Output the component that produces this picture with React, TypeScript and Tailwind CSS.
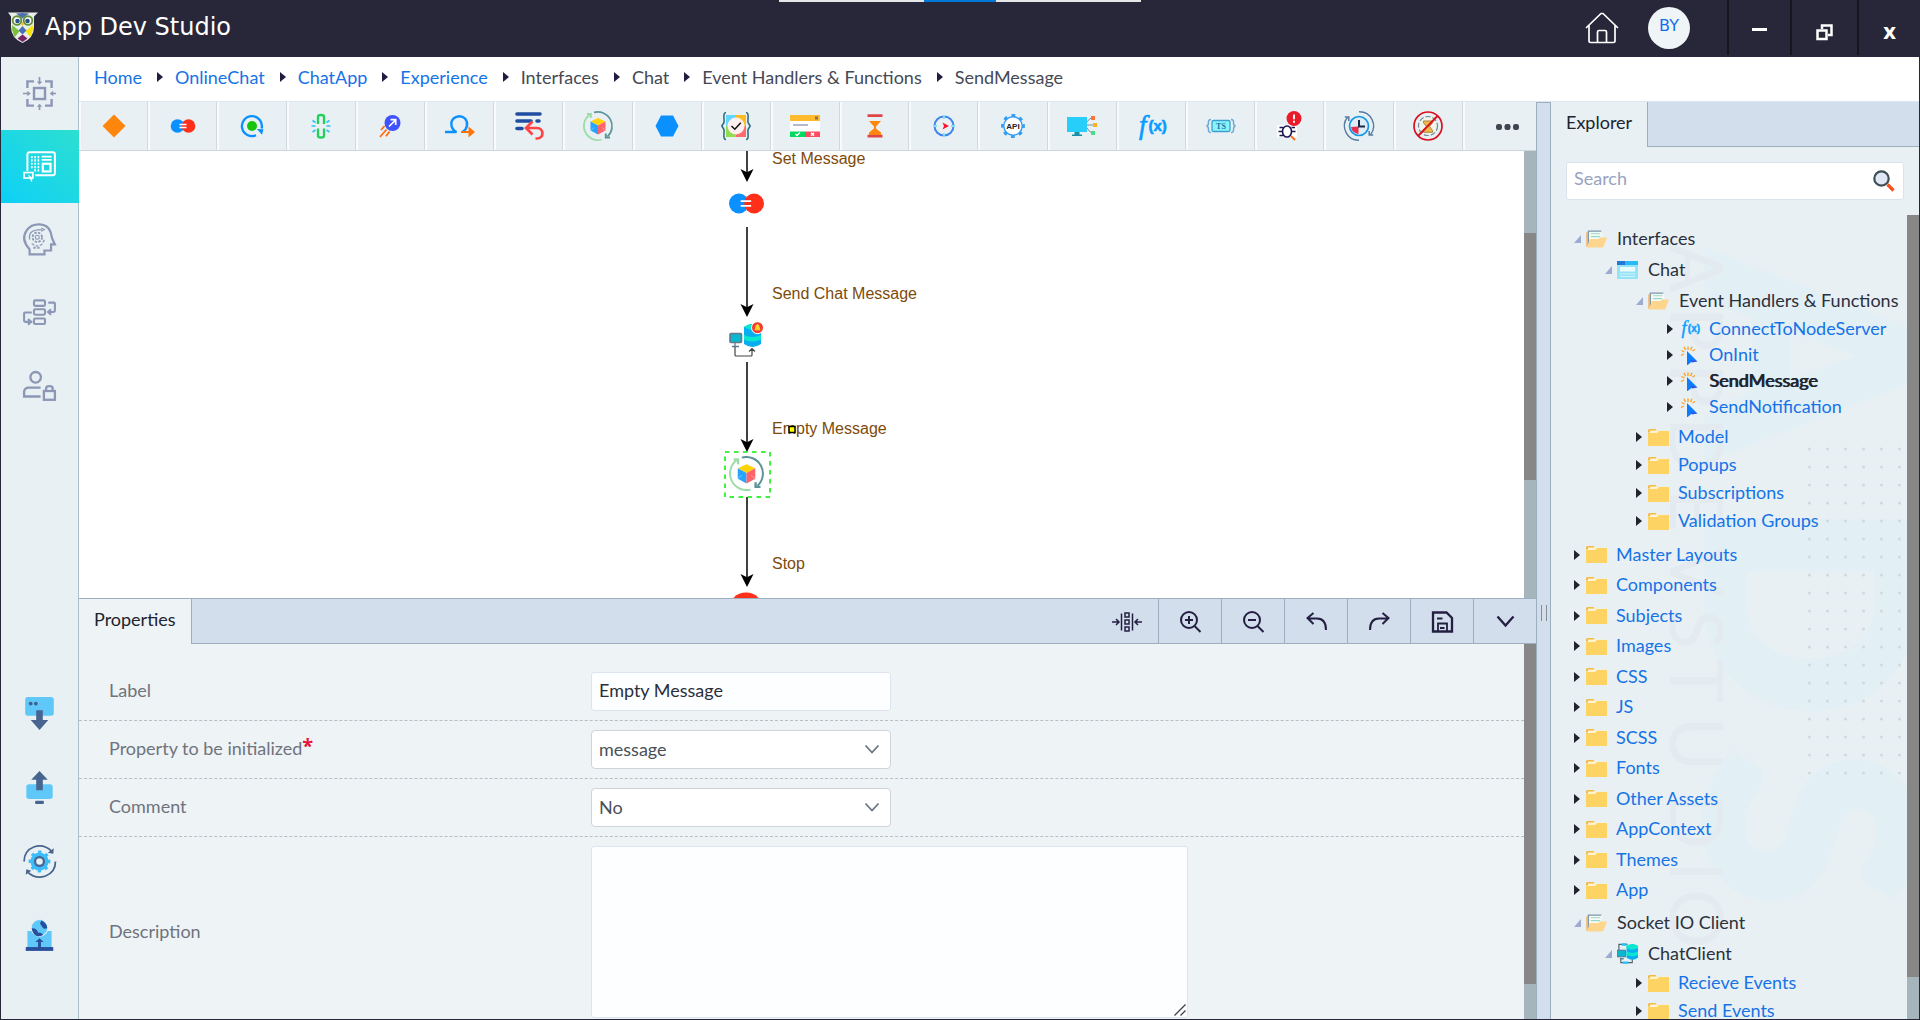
import { useState } from "react";
import type { ReactNode } from "react";

/* ---------- shared drawings ---------- */

const Svg = ({ size = 30, children, className = "" }: { size?: number; children: ReactNode; className?: string }) => (
    <svg width={size} height={size} viewBox="0 0 30 30" fill="none" className={`shrink-0 overflow-visible ${className}`} aria-hidden="true">
        {children}
    </svg>
);

const EqualShape = () => (
    <>
        <circle cx="8.5" cy="15" r="8.5" fill="#0b90ff" />
        <circle cx="21.5" cy="15" r="8.5" fill="#ff3019" />
        <path d="M10 13h9M10 17h9" stroke="#fff" strokeWidth="1.6" />
    </>
);

const CubeShape = () => (
    <>
        <path d="M6.500 3.700A14.200 14.200 0 0 0 18.500 28.800" stroke="#9ddba8" strokeWidth="1.700" />
        <path d="M4 3h3.800v4" stroke="#9ddba8" strokeWidth="2" />
        <path d="M11 1.400A14.200 14.200 0 0 1 24.500 25.500" stroke="#5c9499" strokeWidth="1.700" />
        <path d="M22.800 22.500v4h4.200" stroke="#5c9499" strokeWidth="2" />
        <path d="M15 7 22.500 10.500 15 14.500 7.500 10.500Z" fill="#ffd20a" />
        <path d="M7.500 10.500 15 14.500V23.500L7.500 19.500Z" fill="#27a4ff" />
        <path d="M22.500 10.500 15 14.500V23.500l7.500-4Z" fill="#ff646c" />
        <path d="m7.500 19.500 3.500-3M19 16.500l3.500 3" stroke="#fff" strokeOpacity=".4" strokeWidth=".8" />
    </>
);

const FxShape = () => (
    <g fill="#079cff" stroke="#079cff" strokeWidth=".6">
        <text x="3" y="23" fontSize="27" fontStyle="italic" fontFamily="'Liberation Serif', serif">f</text>
        <text x="12.5" y="20" fontSize="15" fontWeight="bold" fontFamily="'Liberation Sans', sans-serif">(x)</text>
    </g>
);

const GearPath = ({ r, color, width }: { r: number; color: string; width: number }) => (
    <>
        <circle cx="15" cy="15" r={r} stroke={color} strokeWidth={width} />
        <circle cx="15" cy="15" r={r + 1.6} stroke={color} strokeWidth="2.6" strokeDasharray={`${(r + 1.6) * 0.35} ${(r + 1.6) * 0.4354}`} transform="rotate(-10 15 15)" />
    </>
);

/* ---------- toolbar ---------- */

const tools: { name: string; icon: ReactNode }[] = [
    { name: "Decision", icon: <path d="M15 3.500 26.500 15 15 26.500 3.500 15Z" fill="#ff860d" /> },
    {
        name: "Assign",
        icon: (
            <>
                <circle cx="9.500" cy="15" r="6.800" fill="#0b90ff" />
                <circle cx="20.500" cy="15" r="6.800" fill="#ff3019" />
                <path d="M11.500 13.500h7M11.500 16.500h7" stroke="#fff" strokeWidth="1.300" />
            </>
        ),
    },
    {
        name: "Loop",
        icon: (
            <>
                <path d="M19 24.200 a10 10 0 1 1 5.600-6.700" stroke="#0b90ff" strokeWidth="2.300" />
                <path d="m19.800 18 6.700.3-1.500 5.500Z" fill="#0b90ff" />
                <circle cx="15" cy="15" r="5" fill="#17c60c" />
            </>
        ),
    },
    {
        name: "Break",
        icon: (
            <>
                <path d="M12 13V5.500q0-1.500 3-1.500t3 1.500V13M12 17.500v7.500q0 1.500 3 1.500t3-1.500v-7.500" stroke="#1fd15a" strokeWidth="2.300" />
                <path d="M5.500 15h4M20.500 15h4M6.500 9.500l3 2M23.500 9.500l-3 2M6.500 21l3-2M23.500 21l-3-2" stroke="#31c1ef" strokeWidth="1.600" />
            </>
        ),
    },
    {
        name: "Launch",
        icon: (
            <>
                <circle cx="17.500" cy="12" r="8" fill="#4052ff" />
                <path d="m14 15.500 6.500-6.500M15.500 8.700h5.200v5.200" stroke="#fff" strokeWidth="1.700" />
                <path d="m9.500 15-3.500 4M11.500 18.500 5 26M14.500 20.500l-3.500 4.800" stroke="#ff6c0f" strokeWidth="1.800" />
            </>
        ),
    },
    {
        name: "Iterate",
        icon: (
            <>
                <path d="M0 21h11.500C5.500 18 5 11 8.500 7.500c3.500-3 8.500-3 11.500 0 3.500 4 2.500 10.500-2.500 13.500" stroke="#0b90ff" strokeWidth="2.400" />
                <path d="M16 20h7.500v-4.500l6.500 5.500-6.500 5.500V22H16Z" fill="#ff7409" />
            </>
        ),
    },
    {
        name: "Return",
        icon: (
            <>
                <path d="M3 3h23M3 10h14M23 10h2M3 17.500h5" stroke="#1f4da0" strokeWidth="3.600" strokeLinecap="round" />
                <path d="m18.500 10.500-6.500 6.500 6.500 6.500M12.500 17h10.500c7 0 7.500 10.500 0 10.500h-1.500" stroke="#ff4444" strokeWidth="2.700" />
            </>
        ),
    },
    { name: "Initialize", icon: <CubeShape /> },
    { name: "Process", icon: <path d="M3.500 15 9 4.500h12L26.500 15 21 25.500H9Z" fill="#0b90ff" /> },
    {
        name: "Validate",
        icon: (
            <>
                <path d="M5 1.500C1.500 1.500 3.500 8 3 11.500L.800 15 3 18.500c.5 3.500-1.500 10 2 10M25 1.500c3.500 0 1.500 6.500 2 10l2.200 3.500-2.200 3.500c-.5 3.500 1.500 10-2 10" stroke="#28687d" strokeWidth="1.500" />
                <path d="M5 4h10v11H5Z" fill="#63d7ff" />
                <path d="M15 4h10v11H15Z" fill="#fdbd22" />
                <path d="M5 15h10v11H5Z" fill="#93dc52" />
                <path d="M15 15h10v11H15Z" fill="#ff6b6b" />
                <circle cx="15" cy="15" r="8.500" fill="#fdf0ee" />
                <path d="m10.500 15 3.300 3.200 6-6.500" stroke="#111" strokeWidth="1.500" />
            </>
        ),
    },
    {
        name: "Confirm",
        icon: (
            <>
                <path d="M0 4h30v22H0Z" fill="#fff" />
                <path d="M0 4h30v6H0Z" fill="#fdbb2d" />
                <path d="M0 20.500h15V26H0Z" fill="#00d95f" />
                <path d="M15 20.500h15V26H15Z" fill="#ff4b60" />
                <path d="M25 5.500h3v3h-3Z" fill="#8b7555" />
                <path d="M3 14h15" stroke="#8b95ac" strokeWidth="1.300" />
                <path d="m5.500 23 1.500 1.500 3-3M21 21.700l3 3M24 21.700l-3 3" stroke="#fff" strokeWidth="1.400" />
            </>
        ),
    },
    {
        name: "Wait",
        icon: (
            <>
                <path d="M7.500 3.200h15v2.900h-15ZM7.500 23.700h15v2.900h-15Z" fill="#df4545" />
                <path d="M9 10h12l-5 5.500v2l5 4v2.500H9v-2.500l5-4v-2Z" fill="#ff860d" />
            </>
        ),
    },
    {
        name: "Navigate",
        icon: (
            <>
                <circle cx="15" cy="15" r="9.500" stroke="#4086f0" strokeWidth="2" />
                <path d="M15 4v4M15 22v4M4 15h4M22 15h4" stroke="#83e0f5" strokeWidth="1.800" />
                <path d="m13.500 11.500 6.500 3.500-6.500 3.500 1.500-3.500Z" fill="#f7142b" />
            </>
        ),
    },
    {
        name: "API",
        icon: (
            <>
                <GearPath r={9} color="#2f9df4" width={1.8} />
                <circle cx="15" cy="15" r="8.500" fill="#fff" />
                <text x="15" y="18" fontSize="8" fontWeight="bold" textAnchor="middle" fill="#222" fontFamily="'Liberation Sans', sans-serif">API</text>
            </>
        ),
    },
    {
        name: "Broadcast",
        icon: (
            <>
                <path d="M0 6h20v15H0Z" fill="#26cef9" />
                <path d="M7.500 21h5v2.500H15V25H5v-1.500h2.500Z" fill="#1690a5" />
                <path d="M20 11q3-4.500 5-4M20 14h6M20 17q3 5 5 4.500" stroke="#77909c" strokeWidth="1" />
                <path d="M24 5h4v4h-4Z" fill="#ff7535" />
                <path d="M26 12h4v4h-4Z" fill="#fdb31a" />
                <path d="M24 20h4v4h-4Z" fill="#46df86" />
            </>
        ),
    },
    { name: "Function", icon: <FxShape /> },
    {
        name: "Script",
        icon: (
            <>
                <path d="M5 8.500q-3 0-2.500 3.500 0 2.500-2 3 2 .5 2 3-.5 3.500 2.500 3.500M25 8.500q3 0 2.500 3.500 0 2.500 2 3-2 .5-2 3 .5 3.500-2.500 3.500" stroke="#69abd5" strokeWidth="1.500" />
                <rect x="6" y="9.500" width="18" height="11" rx="1.500" fill="#85f6f8" stroke="#3f9dd0" strokeWidth="1.300" />
                <text x="15" y="18" fontSize="8" fontWeight="bold" textAnchor="middle" fill="#2170ac" fontFamily="'Liberation Serif', serif">TS</text>
            </>
        ),
    },
    {
        name: "Exception",
        icon: (
            <>
                <path d="M2 14h20v12H2Z" fill="#fff" />
                <ellipse cx="12" cy="20.500" rx="4.500" ry="5.500" stroke="#1c1750" strokeWidth="1.600" />
                <path d="M4.500 16.500H8M3.500 20.500h4M4.500 24.500H8M16.500 16.500H20M16.500 20.500h4" stroke="#1c1750" strokeWidth="1.500" />
                <path d="m16 25 4 4" stroke="#ff6c20" strokeWidth="2" />
                <circle cx="19" cy="7.500" r="7.500" fill="#ea1b28" />
                <path d="M19 3.500v4.700M19 9.700v2" stroke="#fff" strokeWidth="1.900" />
            </>
        ),
    },
    {
        name: "Timer",
        icon: (
            <>
                <path d="M15 .8a14.200 14.200 0 0 1 11.500 23M15 29.200a14.200 14.200 0 0 1-11.500-23" stroke="#567ba2" strokeWidth="1.400" />
                <path d="M.8 6h4v4M29.200 24h-4v-4" stroke="#567ba2" strokeWidth="1.500" />
                <circle cx="15" cy="15" r="9.500" fill="#ddecf6" stroke="#1598e8" strokeWidth="1.700" />
                <path d="M14.500 15.500v7.500a8 8 0 0 1-7.500-7Z" fill="#e5304f" />
                <path d="M15 9v6.500h6" stroke="#1c2945" strokeWidth="2" />
            </>
        ),
    },
    {
        name: "Cancel timer",
        icon: (
            <>
                <circle cx="15" cy="15" r="9.500" fill="#f3f3e8" stroke="#6c8d9b" strokeWidth="1.200" strokeDasharray="5 2" />
                <path d="M10.500 10h9v1.800l-3 3.700 3 4v1.800h-9v-1.800l3-4-3-3.700Z" fill="#edbb49" stroke="#a3783b" strokeWidth=".9" />
                <circle cx="15" cy="15" r="14" stroke="#d9101d" strokeWidth="1.700" />
                <path d="M24.500 5 5 25" stroke="#d9101d" strokeWidth="1.900" />
            </>
        ),
    },
    {
        name: "More",
        icon: (
            <g fill="#3f444f">
                <rect x="8" y="13" width="6" height="6" rx="2.300" />
                <rect x="16.500" y="13" width="6" height="6" rx="2.300" />
                <rect x="25" y="13" width="6" height="6" rx="2.300" />
            </g>
        ),
    },
];

const Toolbar = () => (
    <div className="flex h-[49px] shrink-0 border-b border-[#ccd6db] bg-[#e8f0f4]">
        {tools.map((tool) => (
            <button key={tool.name} aria-label={tool.name} className="flex min-w-0 flex-1 items-center justify-center border-l-2 border-r border-l-[#f8fafb] border-r-[#d0d9dd] pr-px last:border-r-0 last:pl-1.5 last:pr-0">
                <Svg>{tool.icon}</Svg>
            </button>
        ))}
    </div>
);

/* ---------- sidebar ---------- */

const sideTop: { name: string; icon: ReactNode }[] = [
    {
        name: "Layout",
        icon: (
            <g stroke="#8c97b5" strokeWidth="2.200">
                <path d="M4 10V4h6M20 4h6v6M26 20v6h-6M10 26H4v-6" />
                <rect x="10" y="10" width="10" height="10" />
                <path d="M15 0v5M15 30v-5M0 15h5M30 15h-5" strokeWidth="1.500" />
                <path d="m12.500 4 2.500 3 2.500-3ZM12.500 27l2.500-2.500 2.500 2.500ZM4 12.500 7 15l-3 2.500ZM27.500 12.500 24.500 15l3 2.500Z" fill="#8c97b5" strokeWidth="0" />
            </g>
        ),
    },
    {
        name: "Experience",
        icon: (
            <g stroke="#fff" strokeWidth="1.500">
                <path d="M4 19V4q0-2 2-2h21q2 0 2 2v17q0 2-2 2H11" strokeWidth="1.800" />
                <path d="M8 5.500v12M11 5.500v15M14 5.500v15" strokeDasharray="2 1" />
                <path d="M17 6h9M17 9h9" />
                <rect x="18" y="12.500" width="7" height="7" strokeWidth="2" />
                <rect x="1" y="20.500" width="8" height="5" />
                <path d="m5 23 3 2v4Z" fill="#fff" strokeWidth=".5" />
            </g>
        ),
    },
    {
        name: "Logic",
        icon: (
            <g stroke="#8c97b5">
                <path d="M19.500 28.500H6V24C1 18.500-.500 12 3.500 6.500 9-1 22-.500 25 8l1.500 6 2.500 5.500h-3.500V25h-6Z" strokeWidth="2" />
                <circle cx="13" cy="13" r="4.300" strokeWidth="1.600" strokeDasharray="2.200 1.200" />
                <circle cx="13" cy="13" r="1.800" strokeWidth="1" />
                <path d="M6 15C5 9 8 6 17 6" strokeWidth="1.200" />
                <path d="m16.500 4.500 3 1.500-3 1.500" strokeWidth="1" />
                <path d="M8 18.500q4 4 9 1l3-5" strokeWidth="1.200" strokeDasharray="2.500 1.500" />
                <path d="M9.500 22.500h2M13 22.500h2" strokeWidth="2" />
            </g>
        ),
    },
    {
        name: "Flow",
        icon: (
            <g stroke="#8c97b5" strokeWidth="1.900">
                <rect x="10" y="4" width="10" height="5" rx="1" />
                <rect x="10" y="12" width="10" height="5" rx="1" />
                <rect x="10" y="20.500" width="10" height="5" rx="1" />
                <path d="M23 6h5q1 0 1 1v6q0 1.500-1.500 1.500h-4.500M25.500 12l-2.700 2.500 2.700 2.500M8 15H2q-1 0-1 1v6.500q0 1 1 1h5M4.500 21l3 2.500-3 2.500" />
            </g>
        ),
    },
    {
        name: "Security",
        icon: (
            <g stroke="#8c97b5" strokeWidth="2.100">
                <circle cx="11.500" cy="7.500" r="4.800" />
                <path d="M16 17H5.500Q1 17 1 21v4h15" />
                <rect x="19" y="20" width="10" height="8" />
                <path d="M21 20v-2.500q0-2 3-2t3 2V20" />
            </g>
        ),
    },
];

const sideBottom: { name: string; icon: ReactNode }[] = [
    {
        name: "Download",
        icon: (
            <>
                <rect x="2" y="0" width="26" height="17" rx="2.500" fill="#5fc8f8" />
                <circle cx="7" cy="6" r="1.700" fill="#3f5f8f" />
                <circle cx="11.700" cy="6" r="1.700" fill="#3f5f8f" />
                <path d="M12 12h6v9h5l-8 9-8-9h5Z" fill="#48658f" />
            </>
        ),
    },
    {
        name: "Upload",
        icon: (
            <>
                <rect x="3" y="12" width="24" height="13.500" rx="2.500" fill="#5fc8f8" />
                <path d="M12 17.500h6V8h4.500L15 0 7.500 8H12Z" fill="#48658f" />
                <rect x="11" y="27" width="8" height="3" rx="1" fill="#48658f" />
            </>
        ),
    },
    {
        name: "Sync",
        icon: (
            <>
                <path d="M1 15C1 2 16-4 26 5.500M29.500 15C29.500 28 14 34 4 24.500" stroke="#48658f" strokeWidth="1.600" />
                <path d="m28 3-.5 5-5-1ZM2.500 27l.5-5 4.500 1.500Z" fill="#48658f" />
                <circle cx="15" cy="15" r="7" fill="#3dbcfa" />
                <GearPath r={7} color="#3dbcfa" width={2.4} />
                <circle cx="15" cy="15" r="4" fill="#e8f0f4" stroke="#48658f" strokeWidth="2" />
            </>
        ),
    },
    {
        name: "Publish",
        icon: (
            <>
                <path d="M4 11h5l3 4h6l3-4h5v15H4Z" fill="#5fc8f8" />
                <path d="M2.500 25.500h25V29h-25Z" fill="#274f9c" />
                <circle cx="15" cy="8" r="7.600" fill="#5fc8f8" stroke="#e8f0f4" strokeWidth="1" />
                <path d="M8.500 9q4 0 5 4.500 2-1.500 4 .8-7 3-9-5.300ZM17 2q4 2 4.500 6-3 1-3.500-1l-2-3Z" fill="#274f9c" stroke="#274f9c" />
                <path d="M13.700 27v-6h-2.500L15 17.500l3.800 3.500h-2.500v6Z" fill="#274f9c" />
            </>
        ),
    },
];

const Sidebar = () => {
    const [active, setActive] = useState("Experience");

    return (
        <nav className="flex w-[78px] shrink-0 flex-col border-r border-[#a9bfc9] bg-[#e8f0f4] pb-[47px]">
            {sideTop.map((item) => (
                <button
                    key={item.name}
                    aria-label={item.name}
                    onClick={() => setActive(item.name)}
                    className={`flex h-[73px] items-center justify-center ${active === item.name ? "-mr-px bg-gradient-to-tr from-[#0bd0f6] to-[#2cdfd0] pr-px" : ""}`}
                >
                    <Svg size={33}>{item.icon}</Svg>
                </button>
            ))}
            <div className="grow" />
            {sideBottom.map((item) => (
                <button key={item.name} aria-label={item.name} className="flex h-[74px] items-center justify-center">
                    <Svg size={33}>{item.icon}</Svg>
                </button>
            ))}
        </nav>
    );
};

/* ---------- title bar ---------- */

const Owl = () => (
    <svg width="32" height="31" viewBox="0 0 32 31" fill="none" aria-hidden="true">
        <path d="M1 .5h30l-4 4V15q0 11-11.500 16Q4 26 4 15V4.500Z" fill="#e8efe9" />
        <path d="m9 1.500 6.500 5L22 1.500q-6.500-1-13 0Z" fill="#4d6fae" />
        <circle cx="10" cy="8.500" r="4.300" fill="#fff" stroke="#65913c" strokeWidth="1.900" />
        <circle cx="21" cy="8.500" r="4.300" fill="#fff" stroke="#65913c" strokeWidth="1.900" />
        <circle cx="10.500" cy="9" r="2.300" fill="#274f8d" />
        <circle cx="20.500" cy="9" r="2.300" fill="#274f8d" />
        <path d="m15.500 10 1.500 2-1.500 2-1.500-2Z" fill="#f4bd1a" />
        <path d="M5 13l7.500 6L8 25q-3-4-3-12Z" fill="#7cbd3a" />
        <path d="M26 13l-7.500 6 4.500 6q3-4 3-12Z" fill="#f7e405" />
        <path d="m15.500 14 4 4.500-4 4-4-4Z" fill="#4970b7" />
        <path d="m15.500 22.500 5 4-5 3.500-5-3.500Z" fill="#782363" />
    </svg>
);

const TitleBar = () => (
    <header className="relative flex h-[57px] shrink-0 items-center bg-[#28273a] pl-[7px] pb-0.5">
        <div className="absolute left-1/2 top-0 flex h-[2px] w-[362px] -translate-x-1/2 justify-center bg-[#e4e6e8]">
            <span className="h-full w-[72px] bg-[#0078d7]" />
        </div>
        <Owl />
        <h1 className="ml-1.5 mb-0.5 font-['DejaVu_Sans',sans-serif] text-[24px] leading-8 text-white">App Dev Studio</h1>
        <div className="ml-auto flex h-full items-center">
            <a href="#home" aria-label="Home">
                <svg width="34" height="32" viewBox="0 0 34 32" fill="none" stroke="#fff" strokeWidth="1.700" strokeLinejoin="round" strokeLinecap="round">
                    <path d="M1.500 15.500 16 1.500h2l14.500 14M4 13.500V29q0 1.500 1.500 1.500h23q1.500 0 1.500-1.500V13.500" />
                    <path d="M12.500 30V20q0-1.500 1.500-1.500h6q1.500 0 1.500 1.500v10" />
                </svg>
            </a>
            <button className="ml-[29px] mr-[37px] size-[42px] rounded-full bg-[#eff4f7] pb-1 font-['DejaVu_Sans',sans-serif] text-[16px] leading-5 text-[#1470f0]">BY</button>
            <button aria-label="Minimize" className="flex h-full w-[63px] items-center justify-center border-l-2 border-[#17161f]">
                <span className="mt-1 h-[3px] w-[15px] bg-white" />
            </button>
            <button aria-label="Restore" className="flex h-full w-[67px] items-center justify-center border-l-2 border-[#17161f] pt-2.5">
                <svg width="17" height="17" viewBox="0 0 17 17" fill="none" stroke="#fff" strokeWidth="2.500">
                    <path d="M6 5V1.500h9.500V11H12" />
                    <rect x="1.500" y="6.500" width="9" height="8.500" />
                </svg>
            </button>
            <button aria-label="Close" className="h-full w-[63px] border-l-2 border-[#17161f] pt-1 font-['Open_Sans',sans-serif] text-[22px] font-bold leading-5 text-white">x</button>
        </div>
    </header>
);

/* ---------- breadcrumb ---------- */

const crumbs = [
    { label: "Home", link: true },
    { label: "OnlineChat", link: true },
    { label: "ChatApp", link: true },
    { label: "Experience", link: true },
    { label: "Interfaces", link: false },
    { label: "Chat", link: false },
    { label: "Event Handlers & Functions", link: false },
    { label: "SendMessage", link: false },
];

const Caret = ({ className = "" }: { className?: string }) => (
    <svg width="6" height="10" viewBox="0 0 6 10" className={`shrink-0 ${className}`} aria-hidden="true">
        <path d="M0 0 6 5 0 10Z" fill="currentColor" />
    </svg>
);

const Breadcrumb = () => (
    <ol className="flex h-[45px] shrink-0 items-center border-b border-[#dde6f1] bg-white pl-[15px] pb-1 text-[#454955]">
        {crumbs.map((crumb, index) => (
            <li key={crumb.label} className="flex items-center">
                {index > 0 && <Caret className="ml-[15px] mr-3 text-[#221d40]" />}
                {crumb.link ? <a href={`#${crumb.label}`} className="text-[#1673e6]">{crumb.label}</a> : <span>{crumb.label}</span>}
            </li>
        ))}
    </ol>
);

/* ---------- canvas ---------- */

const Arrow = ({ from, to }: { from: number; to: number }) => (
    <g>
        <path d={`M668 ${from}V${to - 8}`} stroke="#000" strokeWidth="1.500" />
        <path d={`M668 ${to}l-6.500-13 6.500 3.200 6.500-3.200Z`} fill="#000" />
    </g>
);

const Canvas = () => (
    <div className="flex min-h-0 flex-1 bg-white">
        <div className="relative min-w-0 flex-1 overflow-hidden">
            <svg className="absolute inset-0 h-full w-full" fill="none">
                <Arrow from={0} to={31} />
                <Arrow from={76} to={166} />
                <Arrow from={211} to={301} />
                <Arrow from={346} to={436} />
                <svg x="650" y="35" width="35" height="35" viewBox="0 0 30 30"><EqualShape /></svg>
                <svg x="650" y="170" width="35" height="36" viewBox="0 0 35 36">
                    <rect x="1" y="12.500" width="11.500" height="9" rx="1" fill="#08b7d0" stroke="#66798a" strokeWidth="1.600" />
                    <path d="M6 22v3M3 25.500h7" stroke="#66798a" strokeWidth="1.300" />
                    <path d="M6 26v8q0 1 1 1h15q1 0 1-1v-6M20 30.500l3-3 3 3" stroke="#444" strokeWidth="1.200" />
                    <path d="M15 6q8.500-6 17 0v17q-8.500 6-17 0Z" fill="#08aef0" />
                    <path d="M15 6q8.500-6 17 0-8.500 6-17 0ZM15 14q8.500 4 17 0v4.500q-8.500 4-17 0Z" fill="#07e8ce" />
                    <circle cx="28.500" cy="6.700" r="6" fill="#f13f35" stroke="#fff" strokeWidth="1" />
                    <path d="M26 8.800c1.500-2 .5-5.300 2.500-5.300s1 3.300 2.500 5.300Z" fill="#ffd829" stroke="#ffd829" />
                </svg>
                <svg x="650" y="305" width="35" height="35" viewBox="0 0 30 30"><CubeShape /></svg>
                <circle cx="667" cy="459" r="17.500" fill="#ff3019" />
                <rect x="646" y="301" width="45" height="45" stroke="#00f000" strokeWidth="1.500" strokeDasharray="4.500 4.500" />
                <g fill="#7d4a0a" fontFamily="'Liberation Sans', sans-serif" fontSize="16">
                    <text x="693" y="13">Set Message</text>
                    <text x="693" y="148">Send Chat Message</text>
                    <text x="693" y="283">Empty Message</text>
                    <text x="693" y="418">Stop</text>
                </g>
                <rect x="710" y="275.500" width="6" height="6" fill="#ff0" stroke="#000" strokeWidth="1.500" />
            </svg>
        </div>
        <div className="w-3 shrink-0 bg-[#a6b5bc] pt-[82px]">
            <div className="h-[247px] max-h-full bg-[#878787]" />
        </div>
    </div>
);

/* ---------- properties ---------- */

const PanelIcon = ({ children }: { children: ReactNode }) => (
    <svg width="30" height="24" viewBox="0 0 30 24" fill="none" stroke="#241f42" strokeWidth="2" aria-hidden="true">{children}</svg>
);

const panelActions: { name: string; icon: ReactNode }[] = [
    {
        name: "Align",
        icon: (
            <g strokeWidth="1.500">
                <path d="M0 13h7M4 10l3 3-3 3M30 13h-7M26 10l-3 3 3 3M9.500 4.500v17M20.500 4.500v17" />
                <rect x="13" y="4" width="4" height="4" />
                <rect x="13" y="11" width="4" height="4" />
                <rect x="13" y="18" width="4" height="4" />
            </g>
        ),
    },
    { name: "Zoom in", icon: <><circle cx="14" cy="11" r="8" /><path d="m19.500 17 6 6M14 7v8M10 11h8" /></> },
    { name: "Zoom out", icon: <><circle cx="14" cy="11" r="8" /><path d="m19.500 17 6 6M10 11h8" /></> },
    { name: "Undo", icon: <path d="m12.500 4-6 5 6 6M7 9.500h9q9 0 9 11.500" /> },
    { name: "Redo", icon: <path d="m18.500 4 6 5-6 6M24 9.500h-9q-9 0-9 11.500" /> },
    { name: "Save", icon: <><path d="M6 3.500h13.500L25 9v13.500H6Z" strokeWidth="2.300" /><path d="M11 22v-7.500h9V22M10 9.500h5.500M13 19h4.500" strokeWidth="1.800" /></> },
    { name: "Collapse", icon: <path d="m7.500 7.500 8 9 8-9" strokeWidth="2.300" /> },
];

const fieldRow = "flex items-center border-b border-dashed border-[#b7bfc5] px-[30px]";
const fieldLabel = "w-[482px] shrink-0 pb-[3px] text-[#6f737d]";

const SelectField = ({ id, value, options }: { id: string; value: string; options: string[] }) => (
    <div className="relative">
        <select id={id} defaultValue={value} className="h-[39px] w-[300px] appearance-none rounded-[4px] border border-[#ced4da] bg-white px-[7px] pb-px text-[#495057]">
            {options.map((option) => <option key={option}>{option}</option>)}
        </select>
        <svg width="16" height="10" viewBox="0 0 16 10" fill="none" className="pointer-events-none absolute right-[11px] top-[14px]" aria-hidden="true">
            <path d="m1.500 1.500 6.500 7 6.500-7" stroke="#6c7680" strokeWidth="1.800" />
        </svg>
    </div>
);

const Properties = () => (
    <section className="shrink-0 border-t border-[#9dafbf] bg-[#eef3f6]">
        <div className="flex h-[45px] justify-between border-[#9dafbf]">
            <div className="flex h-full w-[113px] items-center border-r border-[#9dafbf] pl-[15px] pb-1.5 text-[#20242e]">Properties</div>
            <div className="flex flex-1 justify-end border-b border-[#9dafbf] bg-[#d3deec]">
                {panelActions.map((action) => (
                    <button key={action.name} aria-label={action.name} className="flex w-[63px] items-center justify-center border-l border-[#9dafbf] pb-px first:border-l-0">
                        <PanelIcon>{action.icon}</PanelIcon>
                    </button>
                ))}
            </div>
        </div>
        <div className="flex">
            <form className="min-w-0 flex-1">
                <div className={`${fieldRow} pt-7 pb-[9px]`}>
                    <label htmlFor="label" className={fieldLabel}>Label</label>
                    <input id="label" defaultValue="Empty Message" className="h-[39px] w-[300px] rounded-[3px] border border-[#dde4f0] bg-[#fdfeff] px-[7px] pb-[3px] text-[#2a2e3a]" />
                </div>
                <div className={`${fieldRow} py-[9px]`}>
                    <label htmlFor="property" className={fieldLabel}>
                        Property to be initialized<span className="inline-block h-5 align-top font-['Open_Sans',sans-serif] text-[20px] font-bold leading-5 text-[#e8173a]">*</span>
                    </label>
                    <SelectField id="property" value="message" options={["message", "messages"]} />
                </div>
                <div className={`${fieldRow} py-[9px]`}>
                    <label htmlFor="comment" className={fieldLabel}>Comment</label>
                    <SelectField id="comment" value="No" options={["No", "Yes"]} />
                </div>
                <div className="flex items-center px-[30px] pt-[9px] pb-px">
                    <label htmlFor="description" className={fieldLabel}>Description</label>
                    <div className="relative">
                        <textarea id="description" className="block h-[172px] w-[597px] resize-none rounded-[3px] border border-[#dde4f0] bg-[#fdfeff] px-[7px]" />
                        <svg width="12" height="12" viewBox="0 0 12 12" fill="none" className="pointer-events-none absolute bottom-0.5 right-0.5" aria-hidden="true">
                            <path d="M.5 11.500 11.500.5M6.500 11.500l5-5" stroke="#3d3f45" strokeWidth="1.300" />
                        </svg>
                    </div>
                </div>
            </form>
            <div className="flex w-3 shrink-0 flex-col bg-[#a6b5bc]">
                <div className="h-[340px] bg-[#878787]" />
            </div>
        </div>
    </section>
);

/* ---------- explorer ---------- */

const FolderIcon = () => (
    <svg width="21" height="17" viewBox="0 0 21 17" aria-hidden="true">
        <path d="M0 1.500Q0 0 1.500 0h6l1.500 2h3l1 1.500H0Z" fill="#f5b942" />
        <path d="M2 1.500h18v3H2Z" fill="#fff3d0" />
        <path d="M0 4h9l2-2h10v15H0Z" fill="#fdd364" />
    </svg>
);

const OpenFolderIcon = () => (
    <svg width="22" height="18" viewBox="0 0 22 18" fill="none" aria-hidden="true">
        <path d="M1 2v15" stroke="#f3b567" strokeWidth="1.500" />
        <path d="M3.500 2h13v9h-13Z" fill="#f8fcf9" />
        <path d="M2.500 15V.7h13.500" stroke="#7f97a8" strokeWidth="1.300" />
        <path d="M5 3.500h10M5 6.500h10" stroke="#95d8c4" strokeWidth="1.300" />
        <path d="M1 18 4 9h9l2-1.500h7L18 18Z" fill="#fdd58c" />
    </svg>
);

const PageIcon = () => (
    <svg width="21" height="18" viewBox="0 0 21 18" fill="none" aria-hidden="true">
        <path d="M0 0h21v18H0Z" fill="#94e3f6" />
        <path d="M0 0h21v4H0Z" fill="#27b9f8" />
        <path d="M0 0h8v4H0Z" fill="#2477d8" />
        <path d="M3 6h15v4.500H3Z" fill="#e9fbff" />
        <path d="M3 13h15M3 15.500h15" stroke="#cdf4fc" strokeWidth="1" />
    </svg>
);

const SocketIcon = () => (
    <svg width="22" height="23" viewBox="0 0 22 23" fill="none" aria-hidden="true">
        <path d="M2 9V2h9M4 17v4h12v-4" stroke="#4f6270" strokeWidth="1.200" />
        <path d="M5 2h5M6 21h6" stroke="#21c4f3" strokeWidth="2.500" />
        <path d="M0 8h9v7H0Z" fill="#08b7d0" stroke="#55798e" />
        <path d="M3 17h4" stroke="#55798e" strokeWidth="1.500" />
        <path d="M10 4q6-4 12 0v12q-6 4-12 0Z" fill="#08aef0" />
        <path d="M10 3.500q6-4 12 0v2.500q-6 3-12 0ZM10 9.500q6 3 12 0v3.500q-6 3-12 0Z" fill="#07e8ce" />
    </svg>
);

const EventIcon = () => (
    <svg width="19" height="19" viewBox="0 0 19 19" fill="none" aria-hidden="true">
        <path d="m7 5 10.500 10.500h-5.500l-5 4Z" fill="#0c7dff" />
        <path d="m10.500 13.500 1.500 3 5.500-1Z" fill="#3c50e0" />
        <path d="M8 .5V4M4 .8 5.500 4M12 .8 10.500 4M1.500 4.500 4.500 6M1 9.500l3-1.500M12.500 5l2.500-1.500" stroke="#ff9e16" strokeWidth="1.300" />
    </svg>
);

const FxIcon = () => <svg width="21" height="20" viewBox="0 0 30 30" className="overflow-visible" aria-hidden="true"><FxShape /></svg>;

type NodeKind = "open" | "page" | "socket" | "fn" | "event" | "folder";
type TreeNode = { label: string; kind: NodeKind; current?: boolean; children?: TreeNode[] };

const icons: Record<NodeKind, ReactNode> = {
    open: <OpenFolderIcon />,
    page: <PageIcon />,
    socket: <SocketIcon />,
    fn: <FxIcon />,
    event: <EventIcon />,
    folder: <FolderIcon />,
};

const folders = (...labels: string[]): TreeNode[] => labels.map((label) => ({ label, kind: "folder" }));

const interfaceTree: TreeNode[] = [
    {
        label: "Interfaces", kind: "open", children: [
            {
                label: "Chat", kind: "page", children: [
                    {
                        label: "Event Handlers & Functions", kind: "open", children: [
                            { label: "ConnectToNodeServer", kind: "fn" },
                            { label: "OnInit", kind: "event" },
                            { label: "SendMessage", kind: "event", current: true },
                            { label: "SendNotification", kind: "event" },
                        ],
                    },
                    ...folders("Model", "Popups", "Subscriptions", "Validation Groups"),
                ],
            },
        ],
    },
];

const rootFolders = ["Master Layouts", "Components", "Subjects", "Images", "CSS", "JS", "SCSS", "Fonts", "Other Assets", "AppContext", "Themes", "App"];

const socketTree: TreeNode[] = [
    {
        label: "Socket IO Client", kind: "open", children: [
            { label: "ChatClient", kind: "socket", children: folders("Recieve Events", "Send Events") },
        ],
    },
];

const rowHeight = (node: TreeNode) => {
    if (node.children) return "h-[31px]";
    return node.kind === "folder" ? "h-7" : "h-[26px]";
};

const TreeRow = ({ node, height }: { node: TreeNode; height: string }) => (
    <div className={`flex items-center whitespace-nowrap ${height}`}>
        {node.children ? (
            <svg width="7" height="8" viewBox="0 0 7 8" className="shrink-0 text-[#9dabd3]" aria-hidden="true"><path d="M7 0v8H0Z" fill="currentColor" /></svg>
        ) : (
            <Caret className="mr-px text-[#20242e]" />
        )}
        <span className={`ml-[5px] flex w-[21px] shrink-0 justify-center ${node.children ? "mr-2.5" : "mr-[9px]"}`}>{icons[node.kind]}</span>
        {node.children ? (
            <span className="pb-0.5 text-[#2c303c]">{node.label}</span>
        ) : (
            <a href={`#${node.label}`} className={`pb-0.5 ${node.current ? "text-[#20242e] [text-shadow:1px_0_0_#20242e]" : "text-[#1673e6]"}`}>{node.label}</a>
        )}
    </div>
);

const Tree = ({ nodes }: { nodes: TreeNode[] }) => (
    <ul>
        {nodes.map((node) => (
            <li key={node.label}>
                <TreeRow node={node} height={rowHeight(node)} />
                {node.children && <div className="mb-[3px] pl-[31px]"><Tree nodes={node.children} /></div>}
            </li>
        ))}
    </ul>
);

const dotRows = Array.from({ length: 19 }, (_, i) => i);
const dotCols = Array.from({ length: 6 }, (_, i) => i);

const brandLetters: [string, number][] = [
    ["A", 28], ["P", 92], ["P", 148], ["D", 202], ["E", 274], ["V", 332],
    ["S", 394], ["T", 444], ["U", 502], ["D", 578], ["I", 646], ["O", 674],
];

const Watermark = () => (
    <svg className="absolute inset-0 h-full w-full" aria-hidden="true">
        <g fontFamily="Lato, sans-serif">
            <g fontSize="280" fontWeight="900" fill="#e2eff5" stroke="#e2eff5" strokeWidth="10">
                <text transform="translate(158 42) rotate(90)">A</text>
                <text transform="translate(158 288) rotate(90)">D</text>
                <text transform="translate(158 536) rotate(90)">S</text>
            </g>
            <g fontSize="74" fill="#e4ebf0">
                {brandLetters.map(([letter, y]) => <text key={y} transform={`translate(119 ${y}) rotate(90)`}>{letter}</text>)}
            </g>
        </g>
        <g fill="#d0d9df">
            {dotRows.map((row) => dotCols.map((col) => <circle key={`${row}-${col}`} cx={258.500 + col * 18} cy={234 + row * 18} r="1.500" />))}
        </g>
    </svg>
);

const Explorer = () => (
    <aside className="flex w-[368px] shrink-0 flex-col bg-[#e8f0f4]">
        <div className="flex h-[45px] shrink-0 bg-[#d3deec]">
            <div className="flex w-[97px] items-center border-r border-[#9dafbf] bg-[#e8f0f4] pl-[15px] pb-1.5 text-[#20242e]">Explorer</div>
            <div className="flex-1 border-b border-[#9dafbf]" />
        </div>
        <div className="mx-[15px] mt-[15px] flex h-[38px] shrink-0 items-center rounded-[3px] border border-[#dbe4ee] bg-white pl-[7px] pr-2">
            <input type="search" aria-label="Search" placeholder="Search" className="min-w-0 flex-1 bg-transparent pb-1.5 outline-none placeholder:text-[#98a3bf]" />
            <button aria-label="Run search" className="pb-0.5">
                <svg width="23" height="23" viewBox="0 0 23 23" fill="none">
                    <circle cx="9.500" cy="9.500" r="7.200" fill="#e0e8f5" stroke="#3d4f57" strokeWidth="2.200" />
                    <path d="m15.500 15.500 6 6" stroke="#fa4d1c" strokeWidth="3.200" />
                </svg>
            </button>
        </div>
        <div className="mt-[15px] flex min-h-0 flex-1">
            <div className="relative min-w-0 flex-1 overflow-hidden">
                <Watermark />
                <div className="relative pl-[23px] pt-2">
                    <Tree nodes={interfaceTree} />
                    <ul className="mt-1">
                        {rootFolders.map((label) => (
                            <li key={label} className="h-[31px] even:h-[30px]">
                                <TreeRow node={{ label, kind: "folder" }} height="h-full" />
                            </li>
                        ))}
                    </ul>
                    <div className="mt-0.5"><Tree nodes={socketTree} /></div>
                </div>
            </div>
            <div className="w-3 shrink-0 bg-[#a6b5bc] pb-[42px]">
                <div className="h-full bg-[#878787]" />
            </div>
        </div>
    </aside>
);

const App = () => (
    <div className="flex h-screen flex-col overflow-hidden border-b border-[#28273a] font-[Lato,sans-serif] text-[18px] leading-6">
        <TitleBar />
        <div className="flex min-h-0 flex-1 border-x border-[#28273a]">
            <Sidebar />
            <div className="flex min-w-0 flex-1 flex-col">
                <Breadcrumb />
                <div className="flex min-h-0 flex-1">
                    <main className="flex min-w-0 flex-1 flex-col">
                        <Toolbar />
                        <Canvas />
                        <Properties />
                    </main>
                    <div className="flex w-[15px] shrink-0 cursor-col-resize items-center justify-center gap-1 border border-b-0 border-[#9dafbf] bg-[#d3deec] pt-[103px]">
                        <span className="h-4 w-px bg-[#8a8f96]" />
                        <span className="h-4 w-px bg-[#8a8f96]" />
                    </div>
                    <Explorer />
                </div>
            </div>
        </div>
    </div>
);

export default App;
